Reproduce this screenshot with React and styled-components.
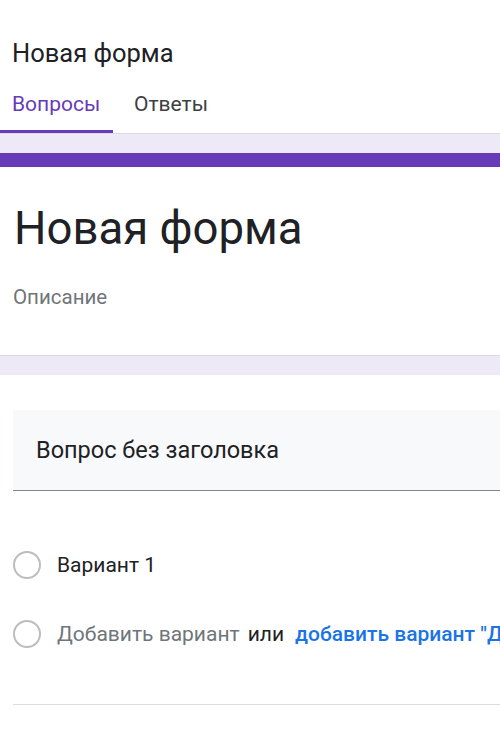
import React from 'react'
import styled, {createGlobalStyle} from 'styled-components'

const GlobalStyle = createGlobalStyle`
  html, body {
    margin: 0;
    padding: 0;
    background: #ffffff;
    font-family: 'Roboto', 'Noto Sans', sans-serif;
    overflow: hidden;
  }
`

export default function App() {
  return (
    <Page>
      <GlobalStyle />
      <TopBar>
        <AppTitle>Новая форма</AppTitle>
        <Tabs>
          <Tab active>Вопросы</Tab>
          <Tab>Ответы</Tab>
        </Tabs>
      </TopBar>
      <Gap />
      <HeaderCard>
        <FormTitle>Новая форма</FormTitle>
        <Description>Описание</Description>
      </HeaderCard>
      <Gap />
      <QuestionCard>
        <QuestionField>
          <QuestionText>Вопрос без заголовка</QuestionText>
        </QuestionField>
        <Options>
          <Option>
            <Radio />
            <OptionLabel>Вариант 1</OptionLabel>
          </Option>
          <Option>
            <Radio />
            <OptionLabel muted>Добавить вариант</OptionLabel>
            <Or>или</Or>
            <AddOther>добавить вариант "Другое"</AddOther>
          </Option>
        </Options>
        <Divider />
      </QuestionCard>
    </Page>
  )
}

const Page = styled.div`
  width: 500px;
  height: 733px;
  overflow: hidden;
  background: #fff;
`
const TopBar = styled.header`
  padding-top: 38px;
  background: #fff;
`
const AppTitle = styled.h1`
  margin: 0 0 0 12px;
  font-size: 25.5px;
  font-weight: 400;
  color: #202124;
  line-height: 30px;
`
const Tabs = styled.nav`
  display: flex;
  margin-top: 22px;
`
const Tab = styled.div`
  box-sizing: border-box;
  width: ${p => (p.active ? '113px' : 'auto')};
  padding: 0 0 0 ${p => (p.active ? '12px' : '21px')};
  height: 43px;
  font-size: 21px;
  font-weight: 400;
  line-height: 28px;
  color: ${p => (p.active ? '#673ab7' : '#3c4043')};
  border-bottom: 3px solid ${p => (p.active ? '#673ab7' : 'transparent')};
  border-top-right-radius: 3px;
`
const Gap = styled.div`
  height: 19px;
  background: #ede9f6;
  border-top: 1px solid #dcd8e4;
`
const HeaderCard = styled.section`
  border-top: 14px solid #673ab7;
  background: #fff;
  padding: 34px 0 0 14px;
  height: 154px;
`
const FormTitle = styled.h2`
  margin: 0;
  font-size: 45.5px;
  font-weight: 400;
  color: #202124;
  line-height: 56px;
`
const Description = styled.p`
  margin: 28px 0 0 -1px;
  font-size: 20.5px;
  color: #70757a;
  line-height: 24px;
`
const QuestionCard = styled.section`
  background: #fff;
  padding: 35px 0 0 13px;
`
const QuestionField = styled.div`
  height: 80px;
  background: #f8f9fa;
  border-bottom: 1px solid #80868b;
  display: flex;
  align-items: center;
  padding-left: 23px;
`
const QuestionText = styled.span`
  font-size: 23.5px;
  color: #202124;
`
const Options = styled.div`
  display: flex;
  flex-direction: column;
  gap: 41px;
  padding-top: 60px;
`
const Option = styled.div`
  display: flex;
  align-items: center;
  height: 28px;
  white-space: nowrap;
`
const Radio = styled.span`
  box-sizing: border-box;
  width: 28px;
  height: 28px;
  flex: none;
  border: 2px solid #bdbdbd;
  border-radius: 50%;
  margin-right: 16px;
`
const OptionLabel = styled.span`
  font-size: 21px;
  color: ${p => (p.muted ? '#70757a' : '#202124')};
`
const Or = styled.span`
  font-size: 21px;
  color: #202124;
  margin: 0 11px 0 8px;
`
const AddOther = styled.span`
  font-size: 21px;
  font-weight: 500;
  color: #1a73e8;
`
const Divider = styled.div`
  height: 1px;
  background: #dadce0;
  margin-top: 56px;
`
